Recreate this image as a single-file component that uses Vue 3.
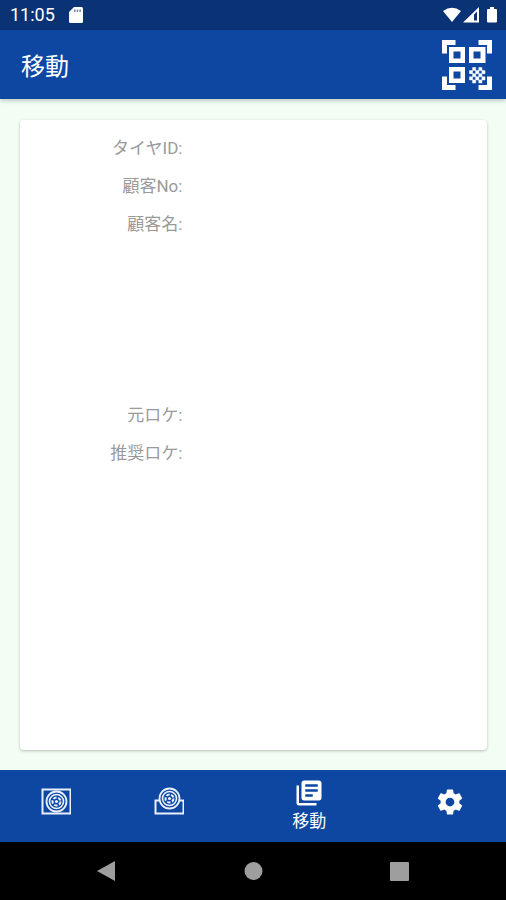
<script setup>
import { ref } from 'vue'

const active = ref('move')
const tabs = [
  { id: 'stock', label: '入庫' },
  { id: 'ship', label: '出庫' },
  { id: 'move', label: '移動' },
  { id: 'settings', label: '設定' },
]
const groups = [
  ['タイヤID:', '顧客No:', '顧客名:'],
  ['元ロケ:', '推奨ロケ:'],
]
</script>

<template>
  <div class="screen">
    <div class="status">
      <span class="clock">11:05</span>
      <svg class="sd" viewBox="0 0 14 16" width="14" height="16">
        <path fill="#fff" d="M5 0h7.500Q14 0 14 1.500v13q0 1.500-1.500 1.500h-11Q0 16 0 14.500V5z" />
        <path fill="#093375" fill-opacity=".6" d="M5 2.500h1.500v2.500H5zM7.700 2.500h1.500v2.500H7.700zM10.400 2.500h1.500v2.500h-1.500z" />
      </svg>
      <svg class="signals" viewBox="0 0 56 18" width="56" height="18">
        <path fill="#fff" d="M0 5Q9-1.500 18 5L9 16z" />
        <path fill="#fff" fill-rule="evenodd" d="M36 1v15.500H20zM34 5.500l-3 3v6h3z" />
        <path fill="#fff" d="M47 1h4v2h2q1 0 1 1v11.500q0 1-1 1h-8q-1 0-1-1V4q0-1 1-1h2z" />
      </svg>
    </div>

    <header class="appbar">
      <h1>移動</h1>
      <button class="scan" type="button" aria-label="QR">
        <svg viewBox="0 0 50 50" width="50" height="50" fill="#fff">
          <path d="M0 0h13.500v5H5v8.500H0zM36.500 0H50v13.500h-5V5h-8.500zM0 36.500h5V45h8.500v5H0zM45 36.500h5V50H36.500v-5H45z" />
          <path fill-rule="evenodd" d="M7 7h16v16H7zM11.500 11.500v7h7v-7zM27 7h16.500v16H27zM31.500 11.500v7h7v-7zM7 27h16v16H7zM11.500 31.500v7h7v-7z" />
          <path stroke="#fff" stroke-width=".5" d="M30.600 27.500h3.100v3.100h-3.100zM36.800 27.500h3.100v3.100h-3.100zM27.500 30.600h3.100v3.100h-3.100zM33.700 30.600h3.100v3.100h-3.100zM39.900 30.600H43v3.100h-3.100zM30.600 33.700h3.100v3.100h-3.100zM36.800 33.700h3.100v3.100h-3.100zM27.500 36.800h3.100v3.100h-3.100zM33.700 36.800h3.100v3.100h-3.100zM39.900 36.800H43v3.100h-3.100zM30.600 39.900h3.100V43h-3.100zM36.800 39.900h3.100V43h-3.100z" />
        </svg>
      </button>
    </header>

    <main class="content">
      <section class="card">
        <dl v-for="(group, i) in groups" :key="i">
          <div v-for="name in group" :key="name" class="row">
            <dt>{{ name }}</dt>
            <dd></dd>
          </div>
        </dl>
      </section>
    </main>

    <nav class="tabs">
      <button
        v-for="tab in tabs"
        :key="tab.id"
        type="button"
        class="tab"
        :class="{ active: active === tab.id }"
        :aria-label="tab.label"
        @click="active = tab.id"
      >
        <svg v-if="tab.id === 'stock'" viewBox="0 0 30 30" width="30" height="30" fill="none" stroke="#eaf0fb">
          <rect x="1.500" y="2.500" width="28" height="24" stroke-width="2" />
          <circle cx="15.500" cy="14.500" r="10" stroke-width="1.800" />
          <circle cx="15.500" cy="14.500" r="7" stroke-width="1.600" />
          <circle cx="15.500" cy="14.500" r="4" stroke-width="2" stroke-dasharray="3.500 1.500" />
          <circle cx="15.500" cy="14.500" r="1.600" fill="#eaf0fb" stroke="none" />
        </svg>
        <svg v-else-if="tab.id === 'ship'" viewBox="0 0 30 30" width="30" height="30" fill="none" stroke="#eaf0fb">
          <path d="M5 13.500H1.500v13h28v-13H26" stroke-width="2" />
          <circle cx="15.500" cy="11.500" r="10" stroke-width="1.800" />
          <circle cx="15.500" cy="11.500" r="7" stroke-width="1.600" />
          <circle cx="15.500" cy="11.500" r="4" stroke-width="2" stroke-dasharray="3.500 1.500" />
          <circle cx="15.500" cy="11.500" r="1.600" fill="#eaf0fb" stroke="none" />
        </svg>
        <svg v-else-if="tab.id === 'move'" viewBox="0 0 24 24" width="30" height="30" fill="#fff">
          <path d="M4 6H2v14c0 1.100.9 2 2 2h14v-2H4V6zm16-4H8c-1.100 0-2 .9-2 2v12c0 1.100.9 2 2 2h12c1.100 0 2-.9 2-2V4c0-1.100-.9-2-2-2zm-1 9H9V9h10v2zm-4 4H9v-2h6v2zm4-8H9V5h10v2z" />
        </svg>
        <svg v-else viewBox="0 0 24 24" width="30" height="30" fill="#fff">
          <path d="M19.430 12.980c.04-.32.07-.64.07-.98s-.03-.66-.07-.98l2.110-1.650c.19-.15.24-.42.12-.64l-2-3.460c-.12-.22-.39-.3-.61-.22l-2.490 1c-.52-.4-1.080-.73-1.690-.98l-.38-2.650C14.460 2.180 14.250 2 14 2h-4c-.25 0-.46.18-.49.42l-.38 2.650c-.61.25-1.170.59-1.690.98l-2.490-1c-.23-.09-.49 0-.61.22l-2 3.460c-.13.22-.07.49.12.64l2.110 1.650c-.04.32-.07.65-.07.98s.03.66.07.98l-2.110 1.650c-.19.15-.24.42-.12.64l2 3.460c.12.22.39.3.61.22l2.490-1c.52.4 1.080.73 1.690.98l.38 2.650c.03.24.24.42.49.42h4c.25 0 .46-.18.49-.42l.38-2.650c.61-.25 1.170-.59 1.690-.98l2.490 1c.23.09.49 0 .61-.22l2-3.460c.12-.22.07-.49-.12-.64l-2.110-1.650zM12 15.500c-1.930 0-3.500-1.570-3.500-3.500s1.570-3.500 3.500-3.500 3.500 1.570 3.500 3.500-1.570 3.500-3.500 3.500z" />
        </svg>
        <span v-if="active === tab.id">{{ tab.label }}</span>
      </button>
    </nav>

    <div class="system">
      <button type="button" aria-label="戻る">
        <svg viewBox="0 0 20 22" width="20" height="22"><path fill="#9e9e9e" d="M19 1v20L1 11z" /></svg>
      </button>
      <button type="button" aria-label="ホーム">
        <svg viewBox="0 0 20 20" width="20" height="20"><circle cx="10.500" cy="10" r="9" fill="#9e9e9e" /></svg>
      </button>
      <button type="button" aria-label="履歴">
        <svg viewBox="0 0 20 20" width="20" height="20"><rect x="0" y="1" width="19" height="19" rx="1" fill="#9e9e9e" /></svg>
      </button>
    </div>
  </div>
</template>

<style>
body {
  margin: 0;
}
</style>

<style scoped>
.screen {
  display: flex;
  flex-direction: column;
  min-height: 100vh;
  background: #f2fdf3;
  font-family: Roboto, "Noto Sans CJK JP", sans-serif;
}
button {
  display: flex;
  align-items: center;
  justify-content: center;
  padding: 0;
  border: 0;
  background: none;
  color: inherit;
  font: inherit;
}
.status {
  display: flex;
  align-items: center;
  box-sizing: border-box;
  height: 30px;
  padding: 0 7px 0 10px;
  background: #093375;
  color: #fff;
}
.clock {
  font-size: 18px;
  line-height: 32px;
}
.sd {
  margin-left: 14px;
}
.signals {
  margin-left: auto;
}
.appbar {
  display: flex;
  align-items: center;
  justify-content: space-between;
  box-sizing: border-box;
  height: 69px;
  padding: 0 14px 0 21px;
  background: #0d47a1;
  color: #fff;
  box-shadow: 0 2px 4px rgba(0, 0, 0, 0.2);
}
h1 {
  margin: 0;
  padding-top: 4px;
  font-size: 24px;
  font-weight: 400;
  line-height: 36px;
}
.content {
  display: flex;
  flex: 1;
  padding: 21px 19px 20px 20px;
}
.card {
  display: flex;
  flex: 1;
  flex-direction: column;
  gap: 153px;
  padding-top: 9px;
  border-radius: 4px;
  background: #fff;
  box-shadow: 0 1px 3px rgba(0, 0, 0, 0.25);
}
dl {
  margin: 0;
}
.row {
  display: flex;
  height: 38px;
  font-size: 17px;
  line-height: 38px;
}
dt {
  box-sizing: border-box;
  width: 35%;
  padding-right: 1px;
  color: #9a9a9a;
  text-align: right;
}
dd {
  flex: 1;
  margin: 0;
}
.tabs {
  display: flex;
  height: 72px;
  background: #0d47a1;
  color: #fff;
}
.tab {
  flex: 2;
  flex-direction: column;
  padding-bottom: 8px;
}
.tab.active {
  flex: 3;
  padding-bottom: 0;
}
.tab span {
  font-size: 17px;
  line-height: 26px;
}
.system {
  display: flex;
  height: 58px;
  padding: 0 33px;
  background: #000;
}
.system button {
  flex: 1;
}
</style>
